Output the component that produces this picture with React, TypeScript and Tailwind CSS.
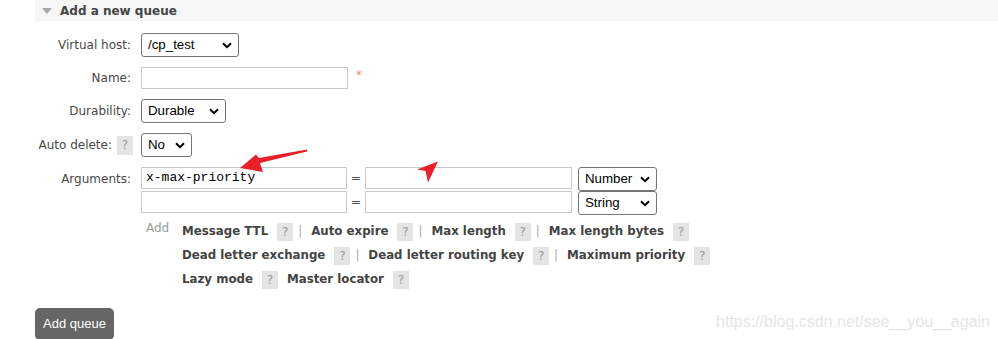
import type { ReactNode } from 'react'

// Add queue form (RabbitMQ management style) with screenshot annotations

const LINK_ROWS: { name: string; sep: boolean }[][] = [
  [
    { name: 'Message TTL', sep: true },
    { name: 'Auto expire', sep: true },
    { name: 'Max length', sep: true },
    { name: 'Max length bytes', sep: false },
  ],
  [
    { name: 'Dead letter exchange', sep: true },
    { name: 'Dead letter routing key', sep: true },
    { name: 'Maximum priority', sep: false },
  ],
  [
    { name: 'Lazy mode', sep: false },
    { name: 'Master locator', sep: false },
  ],
]

function Chevron() {
  return (
    <svg width="10" height="7" viewBox="0 0 10 7" className="shrink-0">
      <polyline points="1,1.2 5,5.2 9,1.2" fill="none" stroke="#000" strokeWidth="2" />
    </svg>
  )
}

function Select({ value, className = '' }: { value: string; className?: string }) {
  return (
    <div
      className={`flex h-[24px] items-center justify-between rounded-[3px] border border-[#767676] bg-white pl-[6px] pr-[6px] font-['Liberation_Sans',Arial,sans-serif] text-[13.3px] text-black ${className}`}
    >
      <span>{value}</span>
      <Chevron />
    </div>
  )
}

function Input({ value = '', className = '' }: { value?: string; className?: string }) {
  return (
    <div
      className={`flex h-[22px] items-center border border-[#c8c8c8] bg-white pl-[4px] font-['Liberation_Mono','Courier_New',monospace] text-[13px] text-black ${className}`}
    >
      {value}
    </div>
  )
}

function Help({ className = '' }: { className?: string }) {
  return (
    <span
      className={`inline-flex h-[18px] w-[16px] items-center justify-center bg-[#e4e4e4] text-[12px] font-normal leading-none text-[#9a9a9a] ${className}`}
    >
      ?
    </span>
  )
}

function Row({ label, children }: { label: ReactNode; children: ReactNode }) {
  return (
    <div className="flex items-center">
      <div className="flex w-[106px] items-center justify-end pr-[10px] text-[12px] text-[#484848]">{label}</div>
      {children}
    </div>
  )
}

export default function App() {
  return (
    <div className="relative h-[339px] w-[998px] overflow-hidden bg-white font-['DejaVu_Sans',Verdana,sans-serif]">
      {/* Section header */}
      <div className="ml-[35px] flex h-[21px] items-center gap-[8px] bg-[#f6f6f6] pl-[7px]">
        <svg width="10" height="6" viewBox="0 0 10 6">
          <polygon points="0,0 10,0 5,6" fill="#a8a8a8" />
        </svg>
        <span className="text-[12px] font-bold text-[#444]">Add a new queue</span>
      </div>

      {/* Form */}
      <div className="mt-[12px] flex flex-col gap-[10px] pl-[35px]">
        <Row label="Virtual host:">
          <Select value="/cp_test" className="w-[98px]" />
        </Row>
        <Row label="Name:">
          <Input className="w-[207px]" />
          <span className="ml-[8px] self-start text-[12px] leading-[16px] text-[#f08a80]">*</span>
        </Row>
        <Row label="Durability:">
          <Select value="Durable" className="w-[85px]" />
        </Row>
        <Row
          label={
            <>
              <span>Auto delete:</span>
              <Help className="ml-[5px] mr-[-2px] h-[19px] w-[15px]" />
            </>
          }
        >
          <Select value="No" className="w-[51px]" />
        </Row>

        <div className="flex">
          <div className="w-[106px] pr-[10px] text-right text-[12px] leading-[24px] text-[#484848]">Arguments:</div>
          <div className="flex flex-col">
            {[
              { key: 'x-max-priority', type: 'Number' },
              { key: '', type: 'String' },
            ].map((a, i) => (
              <div key={i} className="flex h-[24px] items-start">
                <Input value={a.key} className="w-[206px]" />
                <span className="w-[18px] text-center text-[12px] leading-[22px] text-[#484848]">=</span>
                <Input className="w-[207px]" />
                <Select value={a.type} className="ml-[6px] h-[23px] w-[79px]" />
              </div>
            ))}
          </div>
        </div>
      </div>

      {/* Add argument shortcuts */}
      <div className="mt-[5px] flex pl-[141px]">
        <div className="w-[41px] pl-[5px] text-[12px] leading-[16px] text-[#999]">Add</div>
        <div className="flex flex-col">
          {LINK_ROWS.map((row, r) => (
            <div key={r} className="flex h-[24px] items-center text-[11.8px] font-bold text-[#444]">
              {row.map((item, i) => (
                <span key={item.name} className={`flex items-center ${i > 0 && !row[i - 1].sep ? 'ml-[9px]' : ''}`}>
                  <span>{item.name}</span>
                  <Help className="ml-[9px] h-[17px]" />
                  {item.sep && <span className="ml-[5px] mr-[9px] font-normal text-[#aaa]">|</span>}
                </span>
              ))}
            </div>
          ))}
        </div>
      </div>

      <div className="mt-[16px] pl-[35px]">
        <button className="h-[32px] rounded-[5px] bg-[#666] px-[8px] font-['Liberation_Sans',Arial,sans-serif] text-[13px] text-white">
          Add queue
        </button>
      </div>

      {/* Watermark */}
      <div className="absolute right-[8px] top-[312px] font-['Liberation_Sans',Arial,sans-serif] text-[16px] leading-[20px] text-[#e6e6e6]">
        https://blog.csdn.net/see__you__again
      </div>

      {/* Red annotation arrows */}
      <svg className="pointer-events-none absolute left-0 top-0" width="998" height="339" viewBox="0 0 998 339">
        <polygon
          points="307,149.5 259,158 256,154.5 240,168 263,172 260,163 307,151.5"
          fill="#e8202a"
        />
        <polygon points="438,161.5 417,169.5 425.5,171 428,182.5" fill="#e8202a" />
      </svg>
    </div>
  )
}
